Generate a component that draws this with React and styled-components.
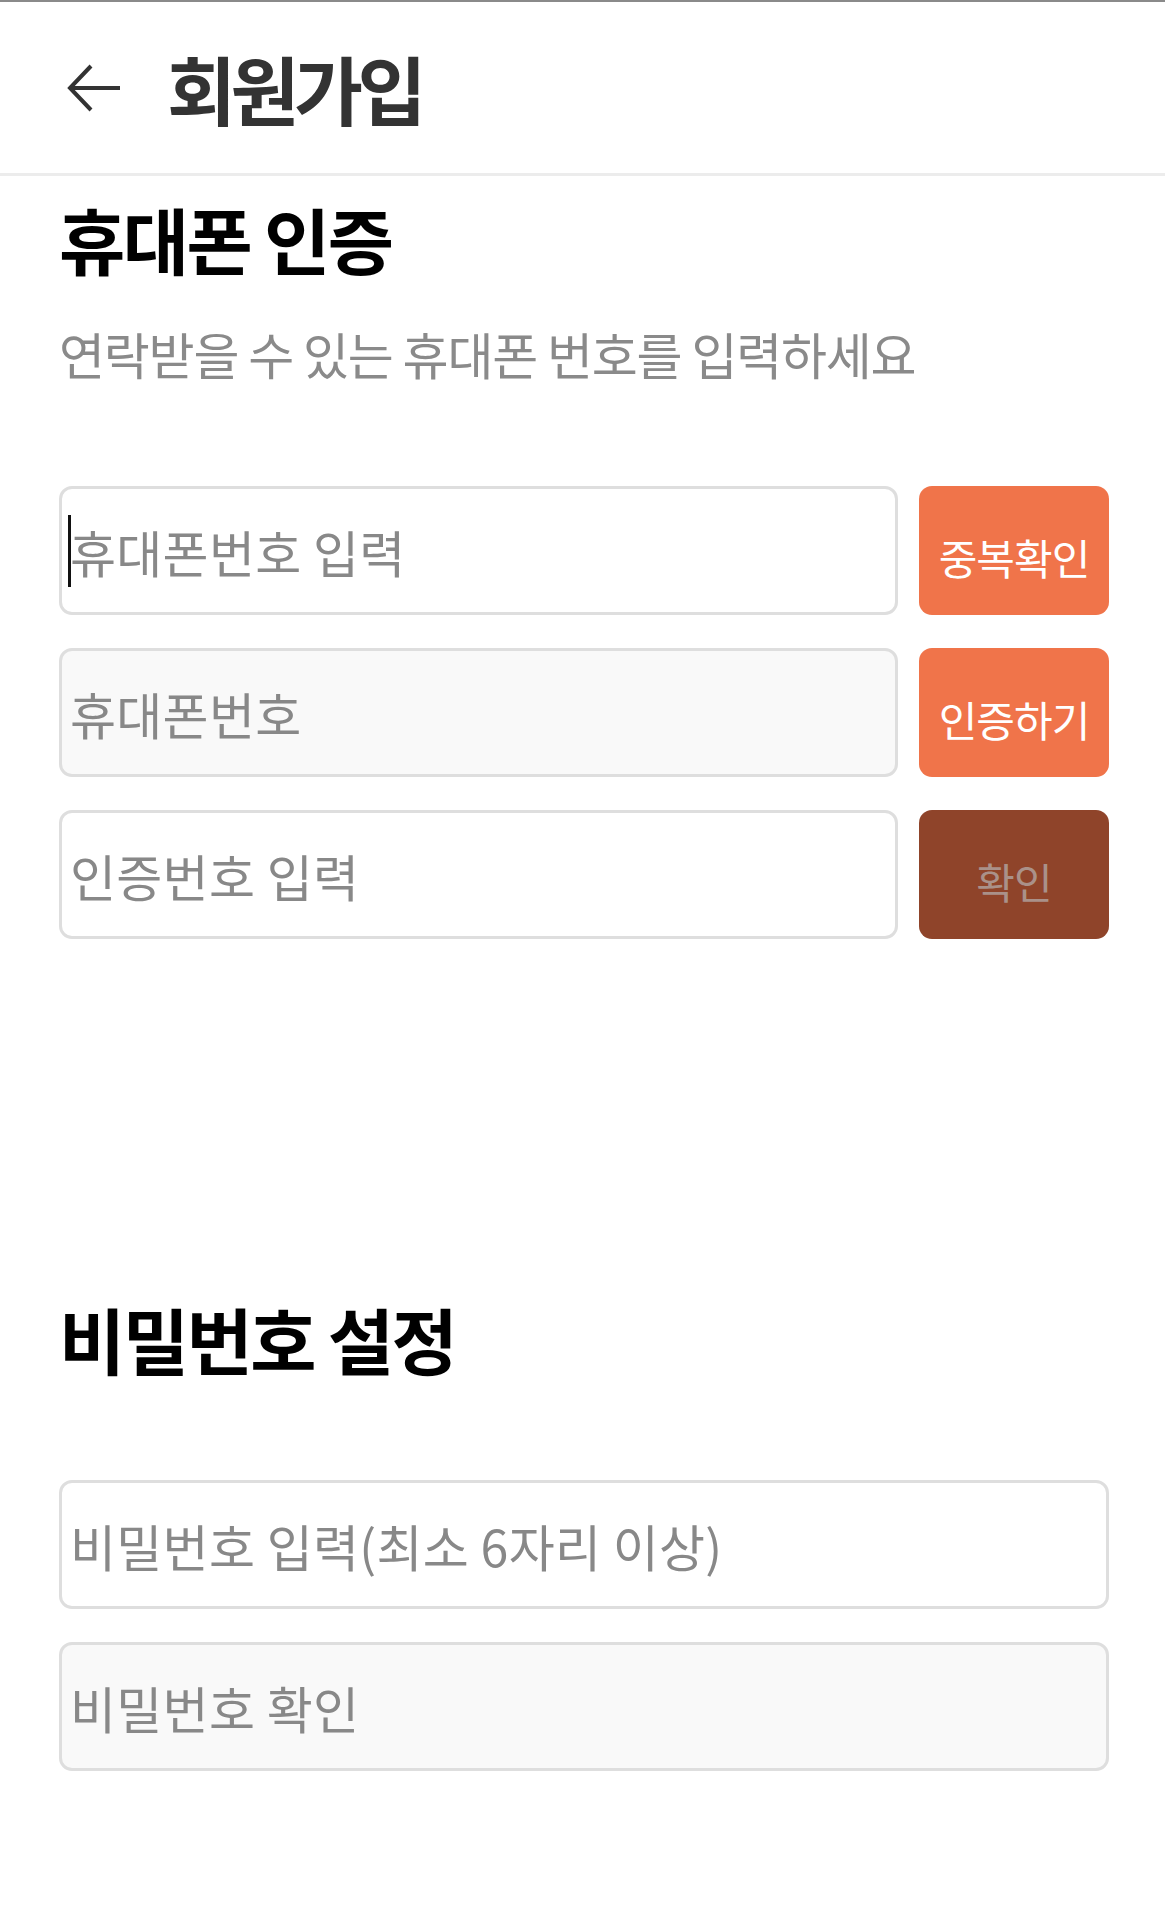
import React from "react";
import styled, { createGlobalStyle } from "styled-components";

const GlobalStyle = createGlobalStyle`
  html, body {
    margin: 0;
    padding: 0;
    background: #fff;
  }
  body {
    font-family: "Noto Sans CJK KR", "Noto Sans", sans-serif;
  }
  * {
    box-sizing: border-box;
  }
`;

const Page = styled.div`
  width: 1165px;
  min-height: 1920px;
  background: #fff;
  border-top: 2px solid #8a8a8a;
`;

const Header = styled.header`
  height: 174px;
  display: flex;
  align-items: center;
  gap: 45px;
  padding-left: 66px;
  border-bottom: 3px solid #ececec;
`;

const BackButton = styled.button`
  width: 56px;
  height: 50px;
  padding: 0;
  border: 0;
  background: none;
  display: flex;
  align-items: center;
  justify-content: center;
  cursor: pointer;
`;

const Title = styled.h1`
  margin: 0;
  font-size: 75px;
  line-height: 1;
  font-weight: 700;
  letter-spacing: -5.5px;
  color: #333;
`;

const Content = styled.main`
  padding: 0 56px 0 59px;
  display: flex;
  flex-direction: column;
`;

const SectionTitle = styled.h2`
  margin: ${(p) => p.$top}px 0 0;
  font-size: 72px;
  line-height: 1;
  font-weight: 700;
  letter-spacing: -2.5px;
  color: #000;
`;

const Subtitle = styled.p`
  margin: 54px 0 0;
  font-size: 50px;
  line-height: 1;
  letter-spacing: -1.2px;
  color: #8a8a8a;
`;

const Fields = styled.div`
  margin-top: ${(p) => p.$top}px;
  display: flex;
  flex-direction: column;
  gap: 33px;
`;

const Row = styled.div`
  display: grid;
  grid-template-columns: 1fr 190px;
  gap: 21px;
`;

const InputWrap = styled.div`
  position: relative;
`;

const Input = styled.input`
  width: 100%;
  height: 129px;
  padding: 0 8px;
  border: 3px solid #dedede;
  border-radius: 13px;
  background: ${(p) => (p.disabled ? "#f9f9f9" : "#fff")};
  font-family: inherit;
  font-size: 50px;
  letter-spacing: 0.3px;
  color: #333;
  outline: none;

  &::placeholder {
    color: #888;
  }
`;

const Caret = styled.span`
  position: absolute;
  left: 9px;
  top: 29px;
  width: 3px;
  height: 72px;
  background: #111;
`;

const ActionButton = styled.button`
  height: 129px;
  border: 0;
  border-radius: 13px;
  background: ${(p) => (p.$dim ? "#8f442a" : "#f0744a")};
  color: ${(p) => (p.$dim ? "#aa9189" : "#fff")};
  font-family: inherit;
  font-size: 42px;
  letter-spacing: -1px;
  padding: 12px 0 0;
  cursor: pointer;
`;

const ArrowIcon = () => (
  <svg width="56" height="50" viewBox="0 0 56 50" fill="none">
    <path d="M54 25H5" stroke="#333" strokeWidth="4" />
    <path d="M25 3L4 25l21 22" stroke="#333" strokeWidth="4" />
  </svg>
);

export default function App() {
  return (
    <>
      <GlobalStyle />
      <Page>
        <Header>
          <BackButton aria-label="뒤로가기">
            <ArrowIcon />
          </BackButton>
          <Title>회원가입</Title>
        </Header>
        <Content>
          <SectionTitle $top={26}>휴대폰 인증</SectionTitle>
          <Subtitle>연락받을 수 있는 휴대폰 번호를 입력하세요</Subtitle>
          <Fields $top={108}>
            <Row>
              <InputWrap>
                <Input placeholder="휴대폰번호 입력" />
                <Caret />
              </InputWrap>
              <ActionButton>중복확인</ActionButton>
            </Row>
            <Row>
              <Input placeholder="휴대폰번호" disabled />
              <ActionButton>인증하기</ActionButton>
            </Row>
            <Row>
              <Input placeholder="인증번호 입력" />
              <ActionButton $dim>확인</ActionButton>
            </Row>
          </Fields>
          <SectionTitle $top={363}>비밀번호 설정</SectionTitle>
          <Fields $top={106}>
            <Input type="password" placeholder="비밀번호 입력(최소 6자리 이상)" />
            <Input type="password" placeholder="비밀번호 확인" disabled />
          </Fields>
        </Content>
      </Page>
    </>
  );
}
